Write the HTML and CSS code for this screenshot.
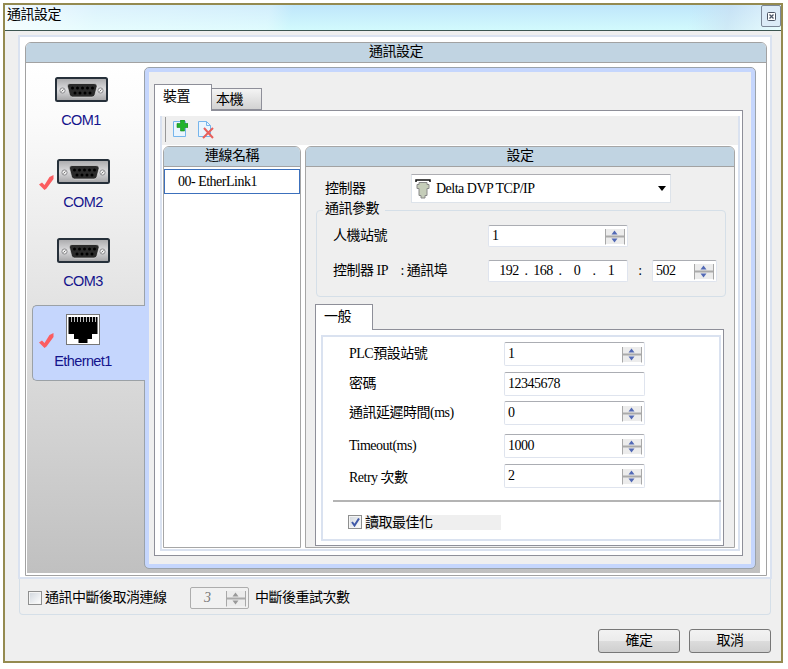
FILE: index.html
```
<!DOCTYPE html>
<html lang="zh-Hant">
  <head>
    <meta charset="utf-8">
    <title>通訊設定</title>
    <link rel="stylesheet" href="styles.css">
  </head>
  <body>
    <svg width="0" height="0" class="defs">
      <linearGradient id="metal" x1="0" y1="0" x2="0" y2="1">
        <stop offset="0" stop-color="#a8a8aa"/>
        <stop offset="0.5" stop-color="#dcdcde"/>
        <stop offset="1" stop-color="#a2a2a4"/>
      </linearGradient>
      <symbol id="com" viewBox="0 0 53 25">
        <rect x="1" y="1" width="51" height="23" rx="1.5" fill="url(#metal)" stroke="#26303a" stroke-width="2"/>
        <circle cx="7.5" cy="13.5" r="2.6" fill="#eee" stroke="#8b8b8e"/>
        <circle cx="45.5" cy="13.5" r="2.6" fill="#eee" stroke="#8b8b8e"/>
        <path d="M6.500 14.500l2-2M44.500 14.500l2-2" stroke="#777"/>
        <path d="M15 6.500h24q3.500 0 3 3l-2 8q-.5 2.500-3 2.500H17.500q-2.500 0-3-2.500l-2-8q-.5-3 2.500-3z" fill="#2b2b2b" stroke="#e6e6e6" stroke-width=".6"/>
        <g fill="#000">
          <circle cx="17.500" cy="11" r="1.500"/><circle cx="22.500" cy="11" r="1.500"/><circle cx="27.500" cy="11" r="1.500"/><circle cx="32.500" cy="11" r="1.500"/><circle cx="37.500" cy="11" r="1.500"/>
          <circle cx="20" cy="16" r="1.500"/><circle cx="25" cy="16" r="1.500"/><circle cx="30" cy="16" r="1.500"/><circle cx="35" cy="16" r="1.500"/>
        </g>
      </symbol>
      <symbol id="check" viewBox="0 0 15 15">
        <path d="M0 9.500l3-2 2.500 2.500L10.500 2 14.500 0v4L7.500 13.500 5.500 15z" fill="#fb5d60"/>
      </symbol>
      <symbol id="spin" viewBox="0 0 20 17">
        <rect x="1" y="1" width="18" height="15" fill="#ececec"/>
        <path d="M.5 1v15.500M19.500 1v15.500" stroke="#a8a8a8"/>
        <path d="M1 8.500h18" stroke="#aaa" stroke-width="2"/>
        <path d="M6.500 6.500L9.500 2.500l3 4zM6.500 10.500l3 4 3-4z" fill="currentColor"/>
      </symbol>
    </svg>

    <div class="window">
      <div class="titlebar">
        <span>通訊設定</span>
        <span class="close">
          <svg width="9" height="9" viewBox="0 0 9 9"><rect x=".5" y=".5" width="8" height="8" rx="1" fill="#fff" stroke="#4c5565"/><path d="M2.500 2.500l4 4M6.500 2.500l-4 4" stroke="#4c5565" stroke-width="1.300"/></svg>
        </span>
      </div>

      <div class="content">
        <div class="frame">
          <div class="panel">
            <div class="panel-title">通訊設定</div>
            <div class="panel-body">
              <div class="ports">
                <div class="port port1"><svg class="com"><use href="#com"/></svg>COM1</div>
                <div class="port port2"><svg class="check"><use href="#check"/></svg><svg class="com"><use href="#com"/></svg>COM2</div>
                <div class="port port3"><svg class="com"><use href="#com"/></svg>COM3</div>
                <div class="port selected">
                  <svg class="check"><use href="#check"/></svg>
                  <svg class="rj45" viewBox="0 0 34 31">
                    <rect x=".5" y=".5" width="33" height="30" fill="#fff" stroke="#777"/>
                    <path d="M2.500 3h29v17h-5.500v5h-4.500v4h-9v-4H8v-5H2.500z" fill="#000"/>
                    <path d="M5.500 3v5M8.500 3v5M11.500 3v5M14.500 3v5M17.500 3v5M20.500 3v5M23.500 3v5M26.500 3v5M29.500 3v5" stroke="#bbb"/>
                  </svg>
                  Ethernet1
                </div>
              </div>

              <div class="device">
                <div class="tabs">
                  <div class="tab active">裝置</div>
                  <div class="tab">本機</div>
                </div>
                <div class="page">
                  <div class="inset">
                    <div class="toolbar">
                      <span class="grip"></span>
                      <svg width="16" height="18" viewBox="0 0 16 18">
                        <path d="M1.500 1.500h12v15h-12z" fill="#eaf5fe" stroke="#76b5ec"/>
                        <path d="M8.500 0h4v3.500H16v4h-3.500V11h-4V7.500H5v-4h3.500z" fill="#22b32b" stroke="#16861c" stroke-width=".6"/>
                      </svg>
                      <svg width="17" height="19" viewBox="0 0 17 19">
                        <path d="M1.500 1.500h8l4 4v11h-12z" fill="#eaf5fe" stroke="#76b5ec"/>
                        <path d="M9.500 1.500v4h4" fill="none" stroke="#76b5ec"/>
                        <path d="M7 8l9 10M16 8L6 18" stroke="#e8605c" stroke-width="2"/>
                      </svg>
                    </div>
                    <div class="columns">
                      <div class="links">
                        <div class="box-title">連線名稱</div>
                        <div class="link">00- EtherLink1</div>
                      </div>

                      <div class="settings">
                        <div class="box-title">設定</div>
                        <div class="row controller">
                          <label>控制器</label>
                          <div class="select">
                            <svg width="16" height="20" viewBox="0 0 16 20">
                              <path d="M1 3V1h14v2" fill="none" stroke="#111" stroke-width="1.500"/>
                              <path d="M4 3.500h8v2h2v4h-2v7h-2v2.500H6v-2.500H4v-7H2v-4h2z" fill="#c5cdb9" stroke="#888"/>
                            </svg>
                            <span>Delta DVP TCP/IP</span>
                            <i class="arrow"></i>
                          </div>
                        </div>

                        <div class="group">
                          <div class="legend">通訊參數</div>
                          <div class="row">
                            <label>人機站號</label>
                            <div class="field">1<svg class="spin"><use href="#spin"/></svg></div>
                          </div>
                          <div class="row">
                            <label>控制器 IP <span class="port-label">: 通訊埠</span></label>
                            <div class="field ip">
                              <b>192</b><i>.</i><b>168</b><i>.</i><b>0</b><i>.</i><b>1</b>
                            </div>
                            <span class="colon">:</span>
                            <div class="field port-no">502<svg class="spin"><use href="#spin"/></svg></div>
                          </div>
                        </div>

                        <div class="subtab">一般</div>
                        <div class="subpage">
                          <div class="general">
                            <div class="row"><label>PLC預設站號</label><div class="field">1<svg class="spin"><use href="#spin"/></svg></div></div>
                            <div class="row r2"><label>密碼</label><div class="field password">12345678</div></div>
                            <div class="row r3"><label>通訊延遲時間(ms)</label><div class="field">0<svg class="spin"><use href="#spin"/></svg></div></div>
                            <div class="row r4"><label>Timeout(ms)</label><div class="field">1000<svg class="spin"><use href="#spin"/></svg></div></div>
                            <div class="row r5"><label>Retry 次數</label><div class="field">2<svg class="spin"><use href="#spin"/></svg></div></div>
                            <div class="line"></div>
                            <div class="optimize">
                              <span class="checkbox"><svg width="9" height="9" viewBox="0 0 9 9"><path d="M1 4l2.500 3.500L8 .5" fill="none" stroke="#4059a8" stroke-width="2"/></svg></span>
                              <span class="shade">讀取最佳化</span>
                            </div>
                          </div>
                        </div>
                      </div>
                    </div>
                  </div>
                </div>
              </div>
            </div>
          </div>
        </div>

        <div class="retry">
          <span class="checkbox"></span>
          <span class="retry-text">通訊中斷後取消連線</span>
          <div class="field disabled">3<svg class="spin"><use href="#spin"/></svg></div>
          <span>中斷後重試次數</span>
        </div>

        <div class="buttons">
          <div class="button">確定</div>
          <div class="button">取消</div>
        </div>
      </div>
    </div>
  </body>
</html>
```
FILE: styles.css
```
* {box-sizing: border-box;}
body {
  margin: 0;
  padding: 3px;
  background-color: white;
  color: black;
  font-family: "Liberation Serif", "Noto Sans CJK TC", serif;
  font-size: 14px;
  letter-spacing: -0.5px;
  line-height: 16px;
  white-space: nowrap;
}
svg {display: block; flex: none;}
.defs {position: absolute;}

.window {
  width: 780px;
  height: 660px;
  border: 2px solid #948a50;
  background-color: #efefef;
}
.titlebar {
  display: flex;
  justify-content: space-between;
  height: 26px;
  padding-left: 2px;
  border-bottom: 1px solid #3c5550;
  background: linear-gradient(100deg, rgba(255,255,255,.8), rgba(255,255,255,.45) 12%, rgba(255,255,255,.3) 34%, rgba(255,255,255,0) 37%, rgba(255,255,255,0) 88%, rgba(205,220,240,.5) 93%, rgba(255,255,255,.5)), linear-gradient(#bfe6fb, #d2fafd);
  line-height: 19px;
}
.close {
  display: flex;
  align-items: center;
  justify-content: center;
  width: 20px;
  height: 22px;
  border: 1px solid #7b8797;
  border-radius: 2px;
  background-color: #dcebf7;
}
.content {padding: 4px 9px 0 13px;}
.frame {
  height: 544px;
  padding: 5px 3px 1px 5px;
  border: 2px solid #dae2f0;
  background-color: white;
}
.panel {
  height: 534px;
  border: 1px solid #a2a2a2;
  border-radius: 6px 6px 0 0;
}
.panel-title {
  height: 20px;
  border-bottom: 1px solid #a2a2a2;
  border-radius: 5px 5px 0 0;
  background-color: #c1d4e2;
  text-align: center;
  line-height: 18px;
}
.panel-body {
  display: flex;
  height: 512px;
  padding: 1px 6px 2px 1px;
  background: linear-gradient(#fff, #fbfbfb 10%, #c0c0c0) content-box;
}

/* port list on the left */
.ports {
  width: 118px;
  font-family: "Liberation Sans", sans-serif;
  font-size: 14.5px;
  letter-spacing: -0.6px;
  color: #14148c;
}
.port {
  position: relative;
  display: flex;
  flex-direction: column;
  align-items: center;
}
.com {width: 53px; height: 25px; margin-bottom: 10px;}
.port1 {height: 82px; padding: 13px 10px 0 0;}
.port2 {height: 78px; padding: 13px 6px 0 0;}
.port3 {height: 81px; padding: 14px 6px 0 0;}
.check {position: absolute; left: 12px; top: 29px; width: 15px; height: 15px;}
.selected {
  z-index: 1;
  width: 113px;
  height: 76px;
  margin-left: 5px;
  padding: 8px 12px 0 0;
  border: 1px solid #9ba1a6;
  border-right: none;
  border-radius: 5px 0 0 5px;
  background-color: #c5d6fd;
}
.selected .check {left: 6px; top: 27px;}
.rj45 {width: 34px; height: 31px; margin-bottom: 8px;}

.device {
  width: 610px;
  height: 500px;
  margin-top: 4px;
  padding: 12px 8px 7px 5px;
  border: 4px solid #c5d6fd;
  border-radius: 4px;
  outline: 1px solid #9aa2aa;
  background-color: #efefef;
}
.tabs {display: flex; align-items: flex-end; height: 26px;}
.tab {
  width: 50px;
  height: 22px;
  padding-left: 4px;
  border: 1px solid #8e8f99;
  border-left: none;
  background: linear-gradient(#f4f4f4, #d2d2d2);
  line-height: 22px;
}
.tab.active {
  position: relative;
  width: 58px;
  height: 27px;
  margin-bottom: -1px;
  padding-left: 8px;
  border-left: 1px solid #8e8f99;
  border-bottom: none;
  background: white;
  line-height: 24px;
}
.page {
  height: 446px;
  padding: 5px 2px 4px 5px;
  border: 1px solid #8e8f99;
  background-color: white;
}
.inset {
  height: 435px;
  border: 2px solid #dae2f0;
  border-top: none;
}
.toolbar {
  display: flex;
  height: 29px;
  padding: 4px 0 0 2px;
  background-color: #efefef;
}
.grip {width: 2px; height: 25px; margin: -3px 6px 0 0; border-right: 1px solid #999;}
.toolbar svg + svg {margin-left: 9px;}
.columns {display: flex; gap: 4px; padding: 1px 0 0 1px;}
.links, .settings {
  height: 402px;
  border: 1px solid #a6a6a6;
  border-radius: 6px 6px 0 0;
}
.links {width: 138px;}
.settings {width: 430px; background-color: #efefef;}
.box-title {
  height: 20px;
  border-bottom: 1px solid #a2a2a2;
  border-radius: 5px 5px 0 0;
  background-color: #c1d4e2;
  text-align: center;
  line-height: 18px;
}
.link {
  height: 25px;
  margin-top: 2px;
  padding-left: 13px;
  border: 1px solid #3c70bc;
  line-height: 23px;
}

/* controller settings */
.row {display: flex; align-items: center;}
.controller {margin: 7px 0 0 19px;}
.controller label {width: 86px;}
.select {
  display: flex;
  align-items: center;
  width: 260px;
  height: 29px;
  padding: 0 4px 0 3px;
  border: 1px solid #dde3ea;
  border-top-color: #adadb2;
  background-color: white;
}
.select span {margin-left: 5px;}
.arrow {
  margin-left: auto;
  border: 4.5px solid transparent;
  border-top: 5px solid black;
  border-bottom: none;
}
.group {
  width: 410px;
  height: 87px;
  margin: 7px 0 0 10px;
  border: 1px solid #d5dfe8;
  border-radius: 4px;
}
.legend {
  width: 62px;
  margin: -10px 0 8px 6px;
  padding-left: 2px;
  background-color: #efefef;
}
.group .row {height: 22px; margin-bottom: 13px; padding-left: 16px;}
.group label {width: 155px;}
.port-label {margin-left: 10px;}
.field {
  display: flex;
  justify-content: space-between;
  width: 140px;
  height: 22px;
  padding: 2px 2px 0 3px;
  border: 1px solid #dfe4ee;
  border-top-color: #abadb3;
  border-radius: 2px;
  background-color: white;
}
.spin {width: 20px; height: 17px; color: #5269b5;}
.ip {padding-left: 10px; justify-content: flex-start;}
.ip b {width: 20px; text-align: center; font-weight: normal;}
.ip i {width: 14px; text-align: center; font-style: normal;}
.colon {width: 24px; text-align: center;}
.field.port-no {width: 65px;}
.subtab {
  position: relative;
  width: 58px;
  height: 26px;
  margin: 7px 0 -1px 9px;
  padding-left: 8px;
  border: 1px solid #8e8f99;
  border-bottom: none;
  background-color: white;
  line-height: 23px;
}
.subpage {
  width: 409px;
  height: 217px;
  margin-left: 9px;
  padding: 5px 2px 4px 5px;
  border: 1px solid #8e8f99;
  background-color: white;
}
.general {
  height: 206px;
  padding-top: 5px;
  border: 2px solid #dae2f0;
}
.general .row {height: 24px; padding-left: 26px;}
.general label {width: 155px;}
.general .field {width: 141px; height: 24px; padding-top: 1px; line-height: 19px;}
.general .spin {margin-top: 1px; height: 19px;}
.general .r2 {margin-top: 6px;}
.general .r3 {margin-top: 5px;}
.general .r4 {margin-top: 9px;}
.general .r5 {margin-top: 6px;}
.general .r5 label {padding-top: 3px;}
.line {height: 2px; margin: 12px -2px 0 10px; background-color: #b4b4b4;}
.optimize {display: flex; margin: 13px 0 0 25px;}
.checkbox {
  display: flex;
  align-items: center;
  justify-content: center;
  width: 14px;
  height: 14px;
  border: 1px solid #8e8f8f;
  background: linear-gradient(135deg, #d0d6dd, #fff);
  box-shadow: inset 0 0 0 1px #f4f4f4;
}
.shade {width: 136px; height: 15px; margin-left: 3px; background-color: #efefef;}

.retry {
  display: flex;
  align-items: center;
  height: 36px;
  margin: 0 1px;
  padding: 2px 0 0 8px;
  border: 1px solid #d5dfe8;
  border-top: none;
  border-radius: 0 0 4px 4px;
}
.retry-text {width: 145px; margin-left: 3px;}
.retry .disabled {
  width: 59px;
  margin-right: 6px;
  padding-left: 13px;
  border-color: #adadad;
  background-color: #f1f1f1;
  color: #777;
  font-style: italic;
}
.disabled .spin {color: #999;}
.buttons {display: flex; justify-content: flex-end; gap: 9px; margin: 14px 1px 0 0;}
.button {
  width: 82px;
  height: 24px;
  border: 1px solid #777;
  border-radius: 3px;
  background: linear-gradient(#f2f2f2, #ebebeb 50%, #dcdcdc 51%, #cfcfcf);
  text-align: center;
  line-height: 21px;
}
```
